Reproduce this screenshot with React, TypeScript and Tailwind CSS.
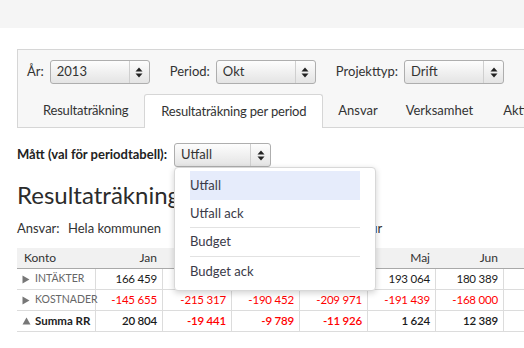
import React from "react";

const font = { fontFamily: "Lato, 'Liberation Sans', sans-serif" };

function Arrows() {
  return (
    <svg width="8" height="11" viewBox="0 0 8 11" className="block">
      <path d="M4 0.5 L7.5 4.5 L0.5 4.5 Z" fill="#222" />
      <path d="M4 10.5 L7.5 6.5 L0.5 6.5 Z" fill="#222" />
    </svg>
  );
}

function Select({ value, w }: { value: string; w: string }) {
  return (
    <div
      className={`flex h-[24px] ${w} items-stretch rounded-[3px] border border-[#aeaeae] bg-linear-to-b from-[#fdfdfd] to-[#e4e4e4] text-[13px] text-[#333]`}
    >
      <span className="flex-1 pl-[6px] leading-[21px]">{value}</span>
      <span className="flex w-[20px] items-center justify-center border-l border-[#cfcfcf]">
        <Arrows />
      </span>
    </div>
  );
}

const rows = [
  { name: "INTÄKTER", icon: "right", bold: false, vals: ["166 459", "195 876", "180 663", "198 045", "193 064", "180 389", ""] },
  { name: "KOSTNADER", icon: "right", bold: false, vals: ["-145 655", "-215 317", "-190 452", "-209 971", "-191 439", "-168 000", ""] },
  { name: "Summa RR", icon: "up", bold: true, vals: ["20 804", "-19 441", "-9 789", "-11 926", "1 624", "12 389", ""] },
];
const months = ["Jan", "Feb", "Mar", "Apr", "Maj", "Jun", ""];
const colW = ["w-[67px]", "w-[69px]", "w-[68px]", "w-[68px]", "w-[68px]", "w-[68px]", "w-[68px]"];

export default function App() {
  return (
    <div className="relative h-[348px] w-[524px] overflow-hidden bg-white text-[#333]" style={font}>
      <div className="h-[28px] bg-[#f5f5f5]" />
      <div className="pl-[17px] pt-[21px]">
        <div className="w-[620px] border border-[#d6d6d6] bg-[#f7f7f7]">
          <div className="flex items-center pl-[9px] pt-[10px] text-[13px]">
            <span className="mr-[6px]">År:</span>
            <Select value="2013" w="w-[100px]" />
            <span className="ml-[20px] mr-[6px]">Period:</span>
            <Select value="Okt" w="w-[100px]" />
            <span className="ml-[20px] mr-[6px]">Projekttyp:</span>
            <Select value="Drift" w="w-[100px]" />
            <span className="ml-[20px] h-[16px] w-[4px] bg-[#f6d89a]" />
          </div>
          <div className="mt-[10px] flex whitespace-nowrap pl-[9px] text-[13px]">
            <div className="-mb-px flex h-[34px] items-center px-[16px] tracking-[-0.2px]">Resultaträkning</div>
            <div className="-mb-px flex h-[34px] items-center rounded-t-[3px] border border-b-0 border-[#d6d6d6] bg-white px-[16px] tracking-[-0.2px]">
              Resultaträkning per period
            </div>
            <div className="-mb-px flex h-[34px] items-center pl-[15px] pr-[14px]">Ansvar</div>
            <div className="-mb-px flex h-[34px] items-center px-[14px]">Verksamhet</div>
            <div className="-mb-px flex h-[34px] items-center px-[16px]">Aktivitet</div>
          </div>
        </div>

        <div className="mt-[15px] flex items-center text-[13px]">
          <span className="mr-[7px] font-bold text-[#222]">Mått (val för periodtabell):</span>
          <div className="relative">
            <Select value="Utfall" w="w-[97px]" />
            <div className="absolute left-0 top-full z-10 w-[202px] rounded-[4px] border border-[#d8d8d8] bg-white px-[15px] pb-[4px] pt-[3px] shadow-[0_2px_6px_rgba(0,0,0,0.18)]">
              <div className="w-[170px] text-[13px] text-[#3a3a48]">
                <div className="flex h-[29px] items-center bg-[#e6ecfb]">Utfall</div>
                <div className="flex h-[28px] items-center border-b border-[#e2e2e2]">Utfall ack</div>
                <div className="flex h-[29px] items-center border-b border-[#e2e2e2]">Budget</div>
                <div className="flex h-[29px] items-center">Budget ack</div>
              </div>
            </div>
          </div>
        </div>

        <div className="mt-[12px] text-[24px] leading-[32px] text-[#2b2b2b]">Resultaträkning</div>

        <div className="mt-[9px] flex h-[18px] items-center whitespace-nowrap text-[13px]">
          <span className="w-[51px]">Ansvar:</span>
          <span className="w-[279px]">Hela kommunen</span>
          <span>Kultur</span>
        </div>

        <div className="mt-[10px] w-[620px] whitespace-nowrap text-[11px]">
          <div className="flex h-[21px] items-center border-b border-[#a9a9a9] bg-[#f1f1f1] text-[12px]">
            <div className="w-[79px] pl-[7px]">Konto</div>
            {months.map((m, i) => (
              <div key={i} className={`${colW[i]} pr-[6px] text-right`}>
                {m}
              </div>
            ))}
          </div>
          {rows.map((r) => (
            <div key={r.name} className="flex h-[21px] items-stretch border-b border-[#dcdcdc]">
              <div className="flex w-[79px] items-center border-r border-[#dcdcdc] pl-[5px]">
                {r.icon === "right" ? (
                  <svg width="8" height="9" viewBox="0 0 8 9" className="mr-[5px] shrink-0">
                    <path d="M0.5 0.5 L7.5 4.5 L0.5 8.5 Z" fill="#777" />
                  </svg>
                ) : (
                  <svg width="9" height="8" viewBox="0 0 9 8" className="mr-[4px] shrink-0">
                    <path d="M4.5 0.5 L8.5 7.5 L0.5 7.5 Z" fill="#777" />
                  </svg>
                )}
                <span className={r.bold ? "text-[11.5px] font-bold text-[#222]" : "text-[10.5px] text-[#666]"}>{r.name}</span>
              </div>
              {r.vals.map((v, i) => (
                <div
                  key={i}
                  className={`${colW[i]} flex items-center justify-end border-r border-[#dcdcdc] pr-[5px] text-[11.5px] tracking-[-0.2px] ${
                    v.startsWith("-") ? "text-[#ff0000]" : "text-[#1a1a1a]"
                  } ${r.bold ? "font-semibold" : ""}`}
                >
                  {v}
                </div>
              ))}
            </div>
          ))}
        </div>
      </div>
    </div>
  );
}
